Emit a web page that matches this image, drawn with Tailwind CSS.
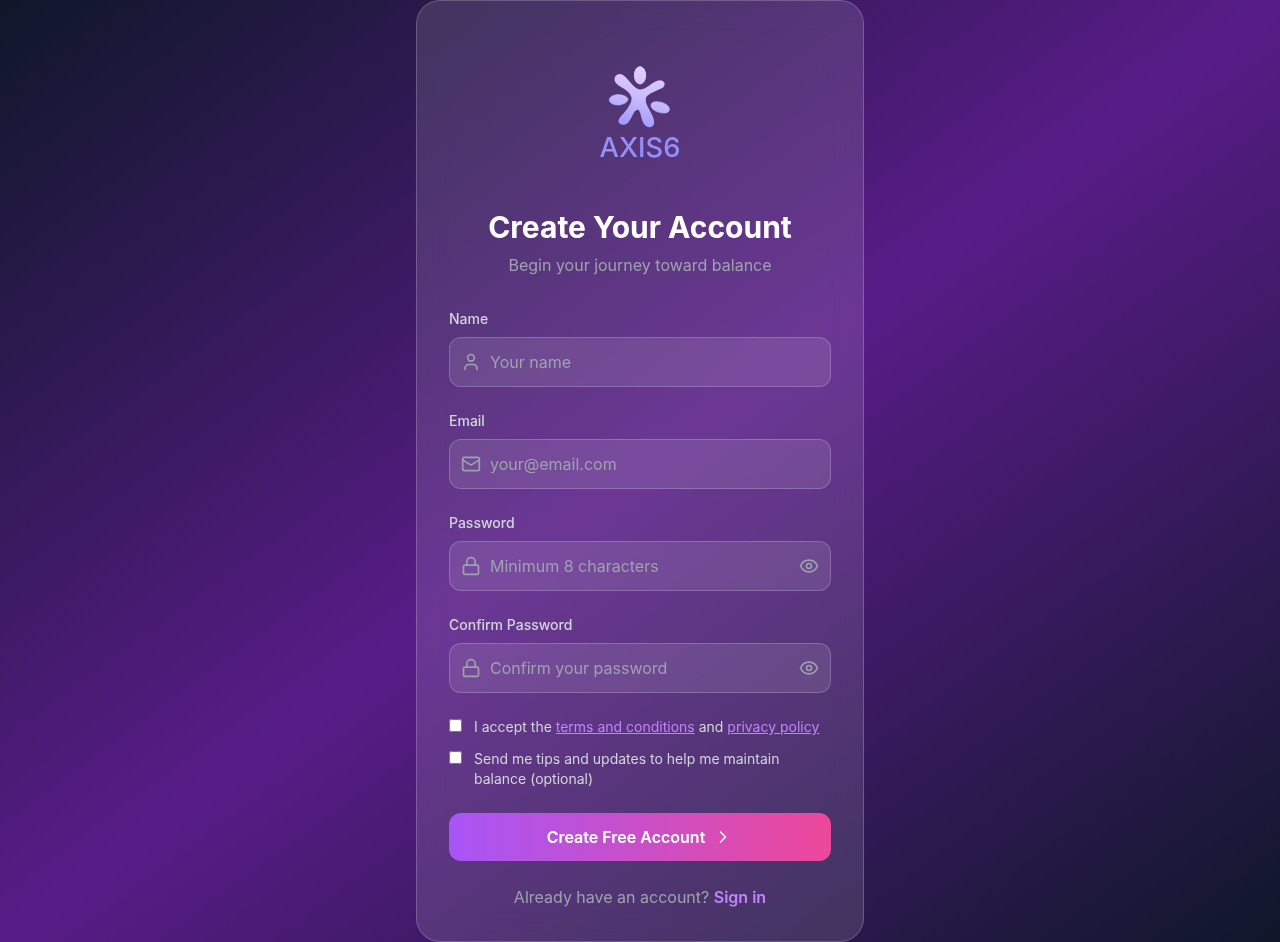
<!DOCTYPE html>
<html lang="en">
<head>
<meta charset="utf-8">
<meta name="viewport" content="width=device-width, initial-scale=1">
<title>AXIS6 - Create Your Account</title>
<script src="https://cdn.jsdelivr.net/npm/@tailwindcss/browser@4"></script>
</head>
<body class="font-[Inter,sans-serif] text-white">
<main class="flex min-h-screen items-center justify-center bg-linear-to-br/srgb from-[#0f172a] via-[#581c87] to-[#0f172a]">
  <div class="w-full max-w-md rounded-3xl border border-white/20 bg-white/12 p-8 backdrop-blur-lg">
    <header class="mb-8 text-center">
      <div class="flex h-44 justify-center pt-[22px]">
        <svg class="h-[116px] w-[100px]" viewBox="0 0 300 348" role="img" aria-label="AXIS6">
          <defs>
            <linearGradient id="mark" gradientUnits="userSpaceOnUse" x1="170" y1="35" x2="130" y2="215">
              <stop offset="0" stop-color="#e2d0fb"/>
              <stop offset="0.5" stop-color="#cabcfc"/>
              <stop offset="1" stop-color="#a09afe"/>
            </linearGradient>
          </defs>
          <g fill="url(#mark)" stroke="url(#mark)" stroke-linejoin="round">
            <ellipse cx="150" cy="61" rx="17" ry="26" stroke-width="3"/>
            <path stroke-width="2" d="M58 134C59 123 75 118 88 119C101 120 114 126 114 133C114 141 100 149 86 150C72 150 58 145 58 134Z"/>
            <path stroke-width="2" d="M183 150C184 140 199 138 213 142C228 146 240 155 238 165C236 175 221 176 207 172C193 168 182 160 183 150Z"/>
            <path stroke-width="7" d="M100 65C92 58 79 60 77 71C76 81 84 87 93 92C109 100 124 112 128 127C131 145 116 163 103 178C94 186 89 191 89 198C90 208 103 208 111 201C124 190 126 161 143 161C158 161 153 188 164 204C172 217 189 216 189 202C189 188 181 177 174 164C165 150 160 136 166 124C174 113 189 107 204 101C216 97 223 92 220 85C217 77 206 78 194 85C180 93 167 107 150 107C130 107 117 79 100 65Z"/>
          </g>
          <text x="150" y="305" text-anchor="middle" font-family="Inter, sans-serif" font-size="82" font-weight="500" fill="#958ffa">AXIS6</text>
        </svg>
      </div>
      <h1 class="mb-2 text-3xl font-bold">Create Your Account</h1>
      <p class="text-[#9ca3af]">Begin your journey toward balance</p>
    </header>

    <form class="space-y-6">
      <div>
        <label for="name" class="mb-2 block text-sm font-medium text-[#d1d5db]">Name</label>
        <div class="relative">
          <svg class="absolute top-1/2 left-3 size-5 -translate-y-1/2 text-[#9ca3af]" viewBox="0 0 24 24" fill="none" stroke="currentColor" stroke-width="2" stroke-linecap="round" stroke-linejoin="round"><path d="M19 21v-2a4 4 0 0 0-4-4H9a4 4 0 0 0-4 4v2"/><circle cx="12" cy="7" r="4"/></svg>
          <input id="name" type="text" placeholder="Your name" class="block w-full rounded-xl border border-white/20 bg-white/10 py-3 pr-4 pl-10 placeholder:text-[#9ca3af]">
        </div>
      </div>
      <div>
        <label for="email" class="mb-2 block text-sm font-medium text-[#d1d5db]">Email</label>
        <div class="relative">
          <svg class="absolute top-1/2 left-3 size-5 -translate-y-1/2 text-[#9ca3af]" viewBox="0 0 24 24" fill="none" stroke="currentColor" stroke-width="2" stroke-linecap="round" stroke-linejoin="round"><rect x="2" y="4" width="20" height="16" rx="2"/><path d="m22 7-8.97 5.7a1.94 1.94 0 0 1-2.06 0L2 7"/></svg>
          <input id="email" type="email" placeholder="your@email.com" class="block w-full rounded-xl border border-white/20 bg-white/10 py-3 pr-4 pl-10 placeholder:text-[#9ca3af]">
        </div>
      </div>
      <div>
        <label for="password" class="mb-2 block text-sm font-medium text-[#d1d5db]">Password</label>
        <div class="relative">
          <svg class="absolute top-1/2 left-3 size-5 -translate-y-1/2 text-[#9ca3af]" viewBox="0 0 24 24" fill="none" stroke="currentColor" stroke-width="2" stroke-linecap="round" stroke-linejoin="round"><rect x="3" y="11" width="18" height="11" rx="2"/><path d="M7 11V7a5 5 0 0 1 10 0v4"/></svg>
          <input id="password" type="password" placeholder="Minimum 8 characters" class="block w-full rounded-xl border border-white/20 bg-white/10 py-3 pr-12 pl-10 placeholder:text-[#9ca3af]">
          <button type="button" aria-label="Show password" class="absolute top-1/2 right-3 -translate-y-1/2 text-[#9ca3af]">
            <svg class="size-5" viewBox="0 0 24 24" fill="none" stroke="currentColor" stroke-width="2" stroke-linecap="round" stroke-linejoin="round"><path d="M2.062 12.348a1 1 0 0 1 0-.696 10.75 10.75 0 0 1 19.876 0 1 1 0 0 1 0 .696 10.75 10.75 0 0 1-19.876 0"/><circle cx="12" cy="12" r="3"/></svg>
          </button>
        </div>
      </div>
      <div>
        <label for="confirm" class="mb-2 block text-sm font-medium text-[#d1d5db]">Confirm Password</label>
        <div class="relative">
          <svg class="absolute top-1/2 left-3 size-5 -translate-y-1/2 text-[#9ca3af]" viewBox="0 0 24 24" fill="none" stroke="currentColor" stroke-width="2" stroke-linecap="round" stroke-linejoin="round"><rect x="3" y="11" width="18" height="11" rx="2"/><path d="M7 11V7a5 5 0 0 1 10 0v4"/></svg>
          <input id="confirm" type="password" placeholder="Confirm your password" class="block w-full rounded-xl border border-white/20 bg-white/10 py-3 pr-12 pl-10 placeholder:text-[#9ca3af]">
          <button type="button" aria-label="Show confirmed password" class="absolute top-1/2 right-3 -translate-y-1/2 text-[#9ca3af]">
            <svg class="size-5" viewBox="0 0 24 24" fill="none" stroke="currentColor" stroke-width="2" stroke-linecap="round" stroke-linejoin="round"><path d="M2.062 12.348a1 1 0 0 1 0-.696 10.75 10.75 0 0 1 19.876 0 1 1 0 0 1 0 .696 10.75 10.75 0 0 1-19.876 0"/><circle cx="12" cy="12" r="3"/></svg>
          </button>
        </div>
      </div>
      <div class="space-y-3">
        <div class="flex items-start">
          <input id="terms" type="checkbox" class="mt-0.5 mr-3 size-[13px] shrink-0">
          <label for="terms" class="text-sm text-[#d1d5db]">I accept the <a href="#terms" class="text-[#c084fc] underline">terms and conditions</a> and <a href="#privacy" class="text-[#c084fc] underline">privacy policy</a></label>
        </div>
        <div class="flex items-start">
          <input id="tips" type="checkbox" class="mt-0.5 mr-3 size-[13px] shrink-0">
          <label for="tips" class="text-sm text-[#d1d5db]">Send me tips and updates to help me maintain balance (optional)</label>
        </div>
      </div>
      <button type="submit" class="flex w-full items-center justify-center rounded-xl bg-linear-to-r/srgb from-[#a855f7] to-[#ec4899] py-3 font-semibold text-white">
        Create Free Account
        <svg class="ml-2 size-5" viewBox="0 0 24 24" fill="none" stroke="currentColor" stroke-width="2" stroke-linecap="round" stroke-linejoin="round"><path d="m9 18 6-6-6-6"/></svg>
      </button>
    </form>
    <p class="mt-6 text-center text-[#9ca3af]">Already have an account? <a href="#signin" class="font-semibold text-[#c084fc]">Sign in</a></p>
  </div>
</main>
</body>
</html>
